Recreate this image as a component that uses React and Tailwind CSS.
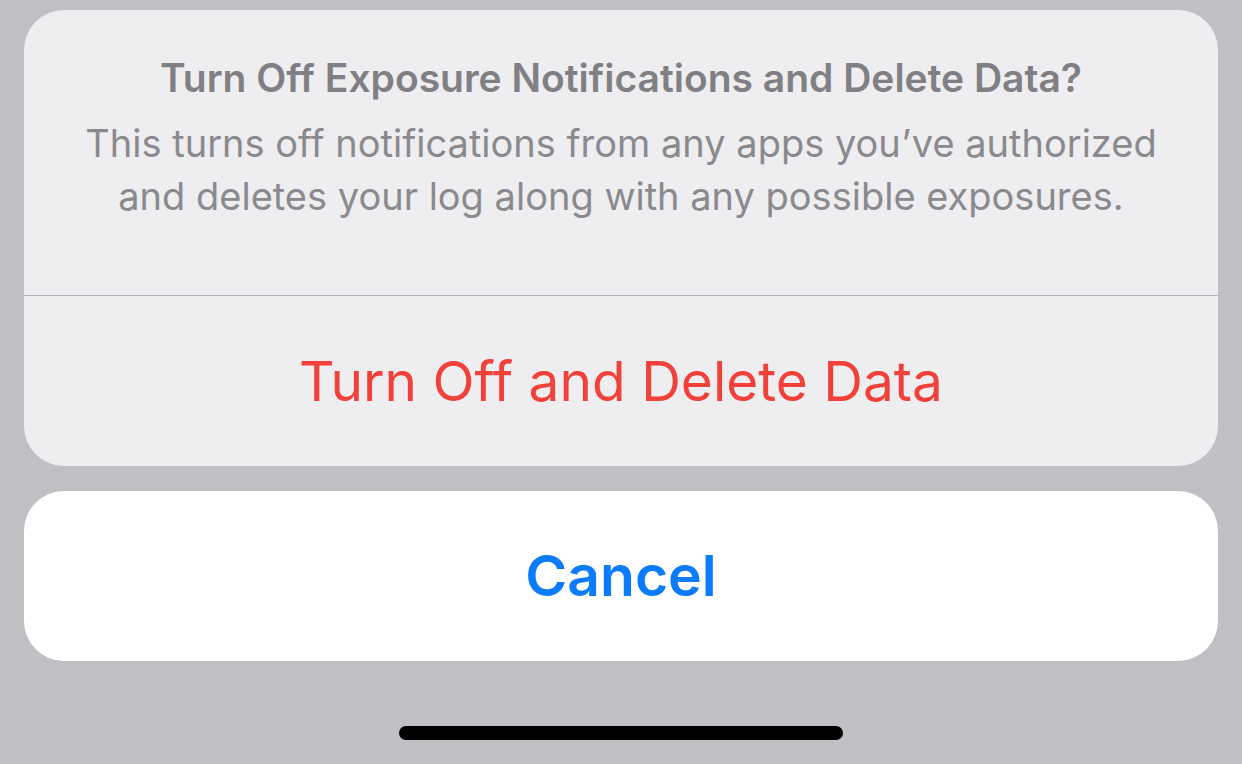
export default function App() {
  return (
    <div
      className="w-[1242px] h-[764px] bg-[#c0bfc4] flex flex-col overflow-hidden"
      style={{ fontFamily: "Inter, 'Liberation Sans', sans-serif" }}
    >
      <div className="mx-[24px] mt-[10px] h-[456px] rounded-[40px] bg-[#eeeef0] flex flex-col">
        <div className="h-[285px] flex flex-col items-center pt-[45px] px-[20px] text-center">
          <h1 className="text-[39px] leading-[46px] font-semibold text-[#808084] whitespace-nowrap">
            Turn Off Exposure Notifications and Delete Data?
          </h1>
          <p className="mt-[16px] text-[38px] leading-[53px] text-[#8a8a8e] whitespace-nowrap">
            This turns off notifications from any apps you’ve authorized
            <br />
            and deletes your log along with any possible exposures.
          </p>
        </div>
        <div className="h-px bg-[#b1b1b5]" />
        <button className="flex-1 flex items-center justify-center text-[55px] text-[#f2403a]">
          Turn Off and Delete Data
        </button>
      </div>
      <button className="mx-[24px] mt-[25px] h-[170px] rounded-[40px] bg-white flex items-center justify-center text-[57px] font-semibold text-[#0b7bff]">
        Cancel
      </button>
      <div className="flex-1 flex items-end justify-center pb-[24px]">
        <div className="w-[444px] h-[14px] rounded-full bg-black" />
      </div>
    </div>
  );
}
